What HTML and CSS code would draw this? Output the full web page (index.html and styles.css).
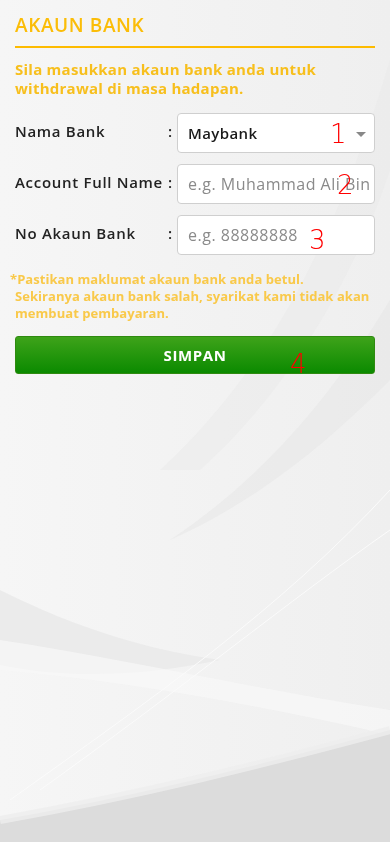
FILE: index.html
```html
<!DOCTYPE html>
<html lang="ms">
<head>
    <meta charset="UTF-8">
    <meta name="viewport" content="width=device-width, initial-scale=1.0">
    <title>Akaun Bank</title>
    <link rel="stylesheet" href="styles.css">
</head>
<body>
    <div class="backdrop">
        <svg viewBox="0 0 390 842" preserveAspectRatio="none" width="390" height="842">
            <defs>
                <linearGradient id="base" x1="0" y1="0" x2="1" y2="0">
                    <stop offset="0" stop-color="#f6f6f6"/>
                    <stop offset="1" stop-color="#efefef"/>
                </linearGradient>
            </defs>
            <rect width="390" height="842" fill="url(#base)"/>
            <path d="M390 60 C340 230 270 370 160 470 L200 470 C300 380 360 260 390 170 Z" fill="#e9e9e9" opacity="0.5"/>
            <path d="M390 300 C330 400 260 480 170 540 C260 500 330 440 390 380 Z" fill="#e6e6e6" opacity="0.5"/>
            <path d="M0 590 C80 630 150 650 220 660 C150 675 70 680 0 665 Z" fill="#e9e9e9" opacity="0.8"/>
            <path d="M0 640 C130 660 260 690 390 710 L390 735 C260 705 120 680 0 670 Z" fill="#f8f8f8" opacity="0.7"/>
            <path d="M40 790 C180 690 290 600 390 530" stroke="#fbfbfb" stroke-width="1" fill="none"/>
            <path d="M10 800 C150 700 280 610 390 490" stroke="#fbfbfb" stroke-width="1" fill="none"/>
            <path d="M0 820 C140 795 260 765 390 730 L390 842 L0 842 Z" fill="#dcdcdc"/>
            <path d="M0 820 C140 795 260 765 390 730" stroke="#eeeeee" stroke-width="8" fill="none" opacity="0.8"/>
        </svg>
    </div>

    <main class="page">
        <h2 class="title">AKAUN BANK</h2>
        <p class="intro">Sila masukkan akaun bank anda untuk withdrawal di masa hadapan.</p>

        <form class="bank-form">
            <div class="row">
                <label class="label">Nama Bank</label>
                <span class="colon">:</span>
                <div class="field select">
                    <span class="value">Maybank</span>
                    <span class="caret"></span>
                    <span class="mark mark-1">1</span>
                </div>
            </div>
            <div class="row">
                <label class="label">Account Full Name</label>
                <span class="colon">:</span>
                <div class="field">
                    <span class="hint">e.g. Muhammad Ali Bin</span>
                    <span class="mark mark-2">2</span>
                </div>
            </div>
            <div class="row">
                <label class="label">No Akaun Bank</label>
                <span class="colon">:</span>
                <div class="field">
                    <span class="hint">e.g. 88888888</span>
                    <span class="mark mark-3">3</span>
                </div>
            </div>

            <p class="note">*Pastikan maklumat akaun bank anda betul.<br>
                <span class="note-indent">Sekiranya akaun bank salah, syarikat kami tidak akan membuat pembayaran.</span></p>

            <button type="button" class="save">SIMPAN<span class="mark mark-4">4</span></button>
        </form>
    </main>
</body>
</html>
```

FILE: styles.css
```css
body{
    margin: 0;
    font-family: "Open Sans", "DejaVu Sans", sans-serif;
    color: #222;
    background: #f2f2f2;
}

.backdrop{
    position: fixed;
    left: 0;
    top: 0;
    width: 390px;
    height: 842px;
    z-index: 0;
}

.backdrop svg{
    display: block;
}

.page{
    position: relative;
    z-index: 1;
    padding: 13px 15px 0 15px;
}

.title{
    margin: 0;
    font-size: 19px;
    font-weight: 600;
    color: #fbbd08;
    letter-spacing: 0.6px;
    line-height: 24px;
    padding-bottom: 9px;
    border-bottom: 2px solid #fdbb00;
}

.intro{
    margin: 12px 0 0 0;
    font-size: 15px;
    font-weight: 700;
    line-height: 19px;
    letter-spacing: 0.25px;
    color: #f7bf1d;
    padding-right: 50px;
}

.bank-form{
    margin-top: 15px;
}

.row{
    display: flex;
    align-items: center;
    margin-bottom: 11px;
}

.label{
    flex: 1;
    font-size: 15px;
    font-weight: 600;
    letter-spacing: 0.7px;
    margin-top: -4px;
}

.colon{
    font-size: 15px;
    font-weight: 600;
    width: 9px;
    margin-top: -4px;
}

.field{
    position: relative;
    width: 198px;
    height: 40px;
    box-sizing: border-box;
    border: 1px solid #cfcfcf;
    border-radius: 4px;
    background: #fff;
    display: flex;
    align-items: center;
    padding: 0 10px;
    overflow: hidden;
    white-space: nowrap;
}

.value{
    font-size: 15px;
    font-weight: 600;
    letter-spacing: 0.4px;
    color: #1a1a1a;
}

.hint{
    font-size: 16px;
    letter-spacing: 0.5px;
    color: #8a8a8a;
}

.caret{
    position: absolute;
    right: 8px;
    top: 18px;
    border-left: 5px solid transparent;
    border-right: 5px solid transparent;
    border-top: 5px solid #888;
}

.mark{
    position: absolute;
    font-family: "DejaVu Sans", sans-serif;
    font-weight: 300;
    font-size: 26px;
    color: #f00;
    line-height: 1;
}

.mark-1{ left: 152px; top: 7px; }
.mark-2{ left: 159px; top: 7px; }
.mark-3{ left: 131px; top: 11px; }
.mark-4{ left: 274px; top: 14px; }

.note{
    margin: 16px 0 0 -5px;
    font-size: 13px;
    font-weight: 700;
    line-height: 17px;
    letter-spacing: 0.05px;
    color: #f9c94a;
}

.note-indent{
    display: block;
    padding-left: 5px;
}

.save{
    position: relative;
    display: block;
    width: 100%;
    height: 38px;
    margin-top: 14px;
    border: 1px solid #2f8a10;
    border-radius: 3px;
    background: linear-gradient(#3ea31a, #0b8a00);
    color: #fff;
    font-family: "Open Sans", sans-serif;
    font-size: 15px;
    font-weight: 700;
    letter-spacing: 0.6px;
    cursor: pointer;
}
```
